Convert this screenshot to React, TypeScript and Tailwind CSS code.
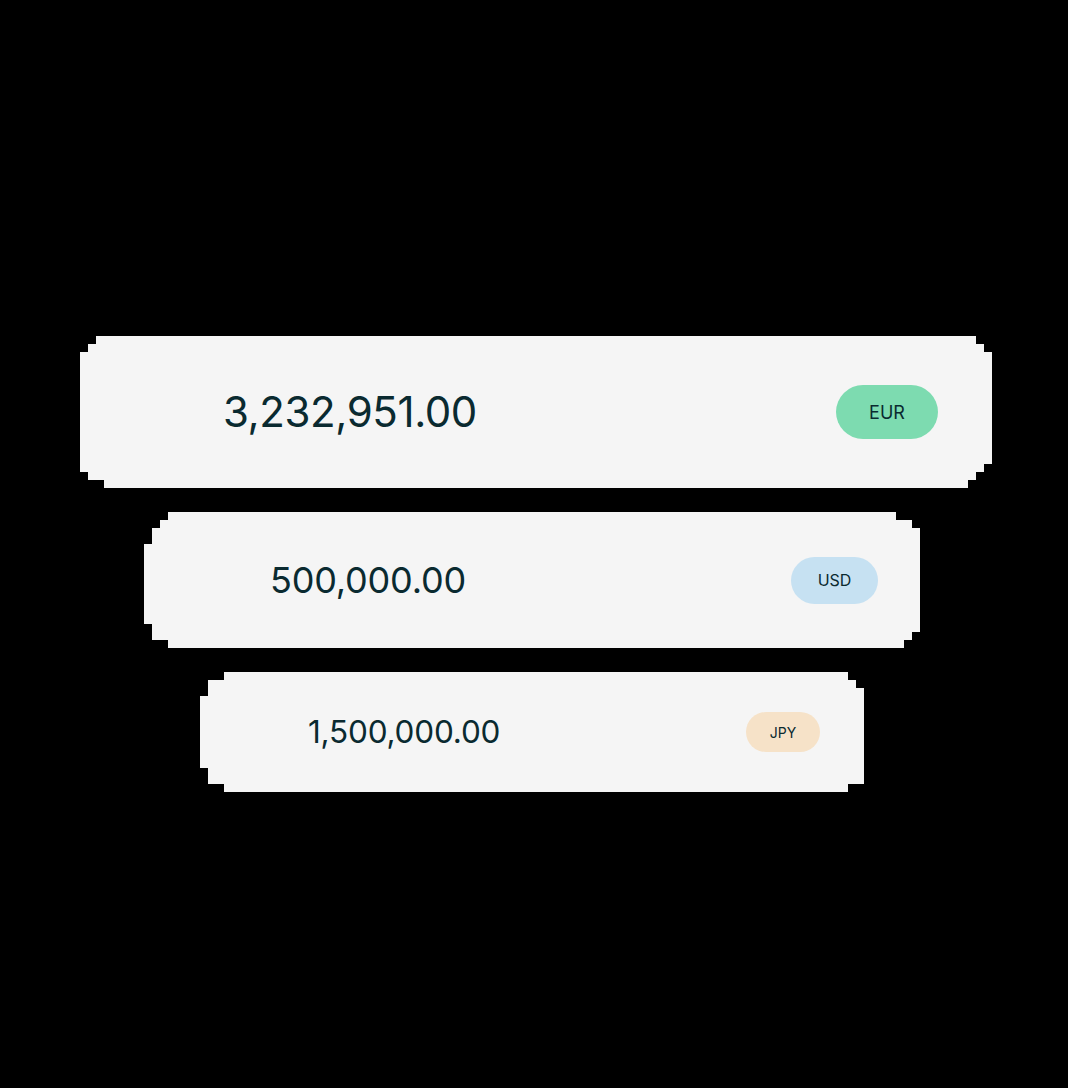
const cardFont = { fontFamily: "Inter, 'Liberation Sans', sans-serif" };

const App = () => {
  return (
    <div className="h-[1088px] w-[1068px] bg-black pt-[336px] text-[#0a2a30]" style={cardFont}>
      <div className="flex flex-col gap-6">
        {/* EUR */}
        <div className="ml-[80px] flex h-[152px] w-[912px] items-center justify-between bg-[#f5f5f5] pl-[143px] pr-[54px] [clip-path:polygon(16px_0,896px_0,896px_8px,904px_8px,904px_16px,912px_16px,912px_128px,904px_128px,904px_136px,896px_136px,896px_144px,888px_144px,888px_152px,24px_152px,24px_144px,8px_144px,8px_136px,0_136px,0_16px,8px_16px,8px_8px,16px_8px)]">
          <span className="text-[42px] leading-none tracking-[-0.4px]">3,232,951.00</span>
          <span className="flex h-[54px] w-[102px] items-center justify-center rounded-full bg-[#7ddbb0] text-[18px]">
            EUR
          </span>
        </div>

        {/* USD */}
        <div className="ml-[144px] flex h-[136px] w-[776px] items-center justify-between bg-[#f5f5f5] pl-[126px] pr-[42px] [clip-path:polygon(24px_0,752px_0,752px_8px,768px_8px,768px_16px,776px_16px,776px_120px,768px_120px,768px_128px,760px_128px,760px_136px,24px_136px,24px_128px,8px_128px,8px_112px,0_112px,0_32px,8px_32px,8px_16px,16px_16px,16px_8px,24px_8px)]">
          <span className="text-[36px] leading-none tracking-[-0.2px]">500,000.00</span>
          <span className="flex h-[47px] w-[87px] items-center justify-center rounded-full bg-[#c6e1f2] text-[16px]">
            USD
          </span>
        </div>

        {/* JPY */}
        <div className="ml-[200px] flex h-[120px] w-[664px] items-center justify-between bg-[#f5f5f5] pl-[108px] pr-[44px] [clip-path:polygon(24px_0,648px_0,648px_8px,656px_8px,656px_16px,664px_16px,664px_112px,648px_112px,648px_120px,24px_120px,24px_112px,8px_112px,8px_96px,0_96px,0_24px,8px_24px,8px_8px,24px_8px)]">
          <span className="text-[31.5px] leading-none tracking-[-0.2px]">1,500,000.00</span>
          <span className="flex h-[40px] w-[74px] items-center justify-center rounded-full bg-[#f6e2c8] text-[14px]">
            JPY
          </span>
        </div>
      </div>
    </div>
  );
};

export default App;
